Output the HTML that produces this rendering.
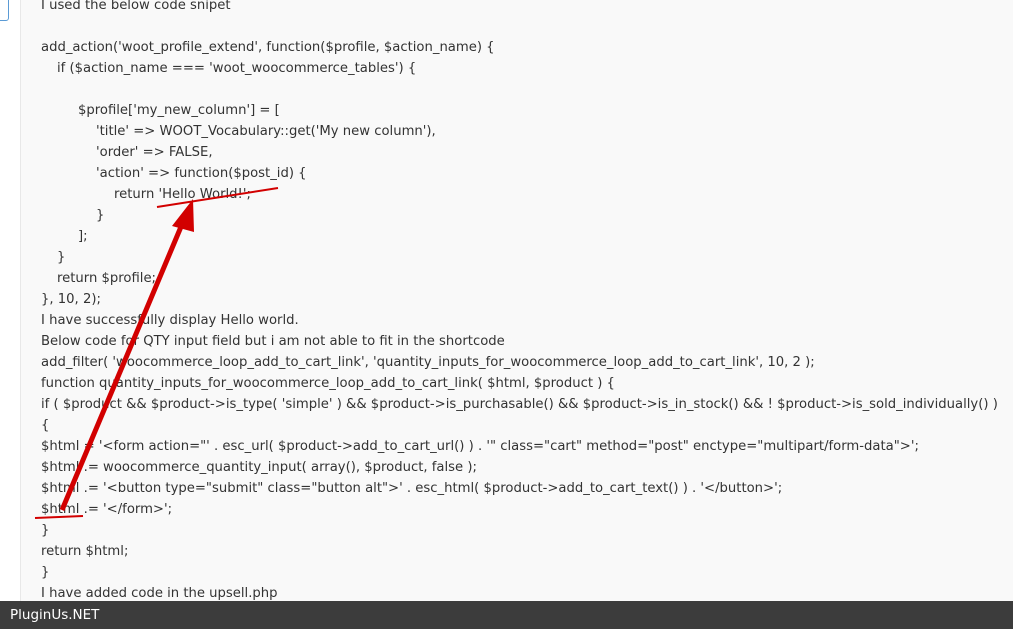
<!DOCTYPE html>
<html><head><style>
body{margin:0;width:1013px;height:629px;overflow:hidden;background:#fff;position:relative;font-family:"DejaVu Sans","Liberation Sans",sans-serif;}
.side{position:absolute;left:0;top:0;width:20px;height:629px;background:#fff;border-right:1px solid #e8e8e8;}
.box{position:absolute;left:-4px;top:-4px;width:11px;height:23px;border:1px solid #5b9bd5;border-radius:3px;}
.main{position:absolute;left:21px;top:0;right:0;height:629px;background:#f9f9f9;}
.txt{position:absolute;left:41px;top:-5px;font-size:13.2px;line-height:21px;color:#333;white-space:pre;}
.txt div{height:21px}
.i1{padding-left:16px}.i2{padding-left:37px}.i3{padding-left:55px}.i4{padding-left:73px}
.foot{position:absolute;left:0;top:601px;width:1013px;height:28px;background:#3c3c3c;color:#fff;font-size:13.5px;line-height:28px;padding-left:10px;box-sizing:border-box;}
svg{position:absolute;left:0;top:0;}
</style></head><body>
<div class="side"><div class="box"></div></div>
<div class="main"></div>
<div class="txt"><div>I used the below code snipet</div><div></div><div>add_action('woot_profile_extend', function($profile, $action_name) {</div><div class="i1">if ($action_name === 'woot_woocommerce_tables') {</div><div></div><div class="i2">$profile['my_new_column'] = [</div><div class="i3">'title' =&gt; WOOT_Vocabulary::get('My new column'),</div><div class="i3">'order' =&gt; FALSE,</div><div class="i3">'action' =&gt; function($post_id) {</div><div class="i4">return 'Hello World!';</div><div class="i3">}</div><div class="i2">];</div><div class="i1">}</div><div class="i1">return $profile;</div><div>}, 10, 2);</div><div>I have successfully display Hello world.</div><div>Below code for QTY input field but i am not able to fit in the shortcode</div><div>add_filter( 'woocommerce_loop_add_to_cart_link', 'quantity_inputs_for_woocommerce_loop_add_to_cart_link', 10, 2 );</div><div>function quantity_inputs_for_woocommerce_loop_add_to_cart_link( $html, $product ) {</div><div>if ( $product &amp;&amp; $product-&gt;is_type( 'simple' ) &amp;&amp; $product-&gt;is_purchasable() &amp;&amp; $product-&gt;is_in_stock() &amp;&amp; ! $product-&gt;is_sold_individually() )</div><div>{</div><div>$html = '&lt;form action="' . esc_url( $product-&gt;add_to_cart_url() ) . '" class="cart" method="post" enctype="multipart/form-data"&gt;';</div><div>$html .= woocommerce_quantity_input( array(), $product, false );</div><div>$html .= '&lt;button type="submit" class="button alt"&gt;' . esc_html( $product-&gt;add_to_cart_text() ) . '&lt;/button&gt;';</div><div>$html .= '&lt;/form&gt;';</div><div>}</div><div>return $html;</div><div>}</div><div>I have added code in the upsell.php</div></div>
<svg width="1013" height="629">
<line x1="157" y1="207" x2="278" y2="188" stroke="#d20000" stroke-width="2"/>
<line x1="35" y1="518" x2="83" y2="516" stroke="#d20000" stroke-width="2"/>
<line x1="62" y1="510" x2="183" y2="222" stroke="#d20000" stroke-width="5"/>
<polygon points="193,199 172,226 194,232" fill="#d20000"/>
</svg>
<div class="foot">PluginUs.NET</div>
</body></html>
